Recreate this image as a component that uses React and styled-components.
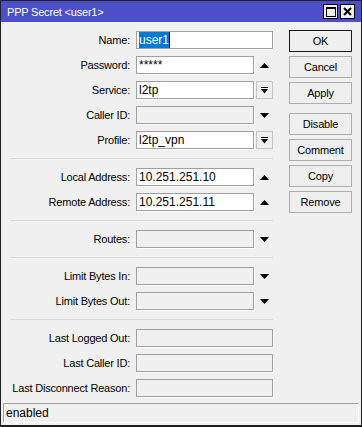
import React from "react";
import styled, { createGlobalStyle } from "styled-components";

const GlobalStyle = createGlobalStyle`
    body {
        margin: 0;
        background: #f0f0f0;
        font-family: "Liberation Sans", Arial, sans-serif;
    }
`

const rows = [
    [
        { label: "Name", full: true, value: "user1", selected: true },
        { label: "Password", value: "*****", tail: "up" },
        { label: "Service", value: "l2tp", tail: "drop" },
        { label: "Caller ID", disabled: true, tail: "down" },
        { label: "Profile", value: "l2tp_vpn", tail: "drop" },
    ],
    [
        { label: "Local Address", value: "10.251.251.10", tail: "up" },
        { label: "Remote Address", value: "10.251.251.11", tail: "up" },
    ],
    [
        { label: "Routes", disabled: true, tail: "down" },
    ],
    [
        { label: "Limit Bytes In", disabled: true, tail: "down" },
        { label: "Limit Bytes Out", disabled: true, tail: "down" },
    ],
    [
        { label: "Last Logged Out", full: true, disabled: true },
        { label: "Last Caller ID", full: true, disabled: true },
        { label: "Last Disconnect Reason", full: true, disabled: true },
    ],
]

const buttons = ["OK", "Cancel", "Apply", "Disable", "Comment", "Copy", "Remove"]

const Arrow = ({ up }) => (
    <svg width="9" height="5" viewBox="0 0 9 5">
        <polygon points={up ? "4.5,0 9,5 0,5" : "0,0 9,0 4.5,5"} fill="#000" />
    </svg>
)

const DropIcon = () => (
    <svg width="7" height="7" viewBox="0 0 7 7">
        <rect x="0" y="0" width="7" height="1" fill="#000" />
        <polygon points="0,2 7,2 3.5,6.5" fill="#000" />
    </svg>
)

const Tail = ({ kind }) => {
    if (kind === "drop") return <DropBtn><DropIcon /></DropBtn>
    if (kind === "up") return <ArrowSlot><Arrow up /></ArrowSlot>
    return <ArrowSlot><Arrow /></ArrowSlot>
}

const App = () => {
    return (
        <>
            <GlobalStyle />
            <Window>
                <TitleBar>
                    <span>PPP Secret &lt;user1&gt;</span>
                    <TitleButtons>
                        <TitleBtn>
                            <svg width="10" height="10" viewBox="0 0 10 10">
                                <rect x="0.5" y="0.5" width="9" height="9" fill="none" stroke="#000" />
                                <rect x="0" y="0" width="10" height="2" fill="#000" />
                            </svg>
                        </TitleBtn>
                        <TitleBtn>
                            <svg width="9" height="9" viewBox="0 0 9 9">
                                <path d="M1 1 L8 8 M8 1 L1 8" stroke="#000" strokeWidth="2" />
                            </svg>
                        </TitleBtn>
                    </TitleButtons>
                </TitleBar>
                <Body>
                    <Form>
                        {rows.map((section, si) => (
                            <React.Fragment key={si}>
                                {si > 0 && <Separator />}
                                <Section>
                                    {section.map((f) => (
                                        <Row key={f.label}>
                                            <Label>{f.label}:</Label>
                                            <Field>
                                                <TextBox $full={f.full} $disabled={f.disabled}>
                                                    {f.selected ? <Selected>{f.value}</Selected> : f.value}
                                                </TextBox>
                                                {f.tail && <Tail kind={f.tail} />}
                                            </Field>
                                        </Row>
                                    ))}
                                </Section>
                            </React.Fragment>
                        ))}
                    </Form>
                    <ButtonColumn>
                        {buttons.map((b) => (
                            <Button key={b} $default={b === "OK"} $spaced={b === "Disable"}>{b}</Button>
                        ))}
                    </ButtonColumn>
                </Body>
                <StatusBar>enabled</StatusBar>
            </Window>
        </>
    );
}

export default App;

const Window = styled.div`
    width: 362px;
    height: 427px;
    box-sizing: border-box;
    border: 1px solid #1f1f1f;
    border-bottom-width: 2px;
    background: #f0f0f0;
    display: flex;
    flex-direction: column;
`
const TitleBar = styled.div`
    height: 21px;
    flex-shrink: 0;
    background: #4d4fc9;
    color: #fff;
    font-size: 11px;
    letter-spacing: -0.2px;
    display: flex;
    align-items: center;
    justify-content: space-between;
    padding: 0 6px 0 6px;
`
const TitleButtons = styled.div`
    display: flex;
    gap: 2px;
`
const TitleBtn = styled.div`
    width: 13px;
    height: 13px;
    background: #f0f0f0;
    border: 1px solid #000;
    display: flex;
    align-items: center;
    justify-content: center;
`
const Body = styled.div`
    flex: 1;
    display: flex;
    padding-top: 8px;
`
const Form = styled.div`
    padding: 1px 0 0 9px;
    width: 263px;
`
const Section = styled.div`
    display: flex;
    flex-direction: column;
    gap: 7px;
`
const Separator = styled.div`
    height: 1px;
    background: #dadada;
    margin: 9px 0;
`
const Row = styled.div`
    display: grid;
    grid-template-columns: 120px 137px;
    column-gap: 6px;
    align-items: center;
    height: 18px;
`
const Label = styled.div`
    text-align: right;
    font-size: 11px;
    letter-spacing: -0.2px;
    color: #000;
    white-space: nowrap;
`
const Field = styled.div`
    display: flex;
    align-items: center;
    gap: 2px;
    height: 18px;
`
const TextBox = styled.div`
    box-sizing: border-box;
    width: ${(p) => (p.$full ? "137px" : "118px")};
    height: 18px;
    border: 1px solid #a0a0a0;
    box-shadow: 1px 1px 0 #fff;
    background: ${(p) => (p.$disabled ? "#f0f0f0" : "#fff")};
    font-size: 12px;
    line-height: 16px;
    padding-left: 2px;
    color: #000;
    white-space: nowrap;
    overflow: hidden;
`
const Selected = styled.span`
    background: #0078d7;
    color: #fff;
    padding: 1px 0;
    border-right: 1px solid #000;
`
const ArrowSlot = styled.div`
    width: 17px;
    display: flex;
    justify-content: center;
    align-items: center;
`
const DropBtn = styled.div`
    box-sizing: border-box;
    width: 17px;
    height: 18px;
    border: 1px solid #c4c4c4;
    background: #f0f0f0;
    display: flex;
    justify-content: center;
    align-items: center;
`
const ButtonColumn = styled.div`
    margin-left: 16px;
    width: 63px;
    display: flex;
    flex-direction: column;
    gap: 4px;
`
const Button = styled.div`
    box-sizing: border-box;
    height: 22px;
    margin-top: ${(p) => (p.$spaced ? "5px" : "0")};
    border: 1px solid ${(p) => (p.$default ? "#1a1a1a" : "#adadad")};
    background: #efefef;
    font-size: 11px;
    letter-spacing: -0.2px;
    display: flex;
    align-items: center;
    justify-content: center;
    color: #000;
`
const StatusBar = styled.div`
    box-sizing: border-box;
    height: 20px;
    margin: 0 2px 2px 2px;
    border-top: 1px solid #a0a0a0;
    border-left: 1px solid #a0a0a0;
    border-right: 1px solid #fff;
    border-bottom: 1px solid #fff;
    font-size: 12px;
    line-height: 18px;
    padding-left: 2px;
    color: #000;
`
